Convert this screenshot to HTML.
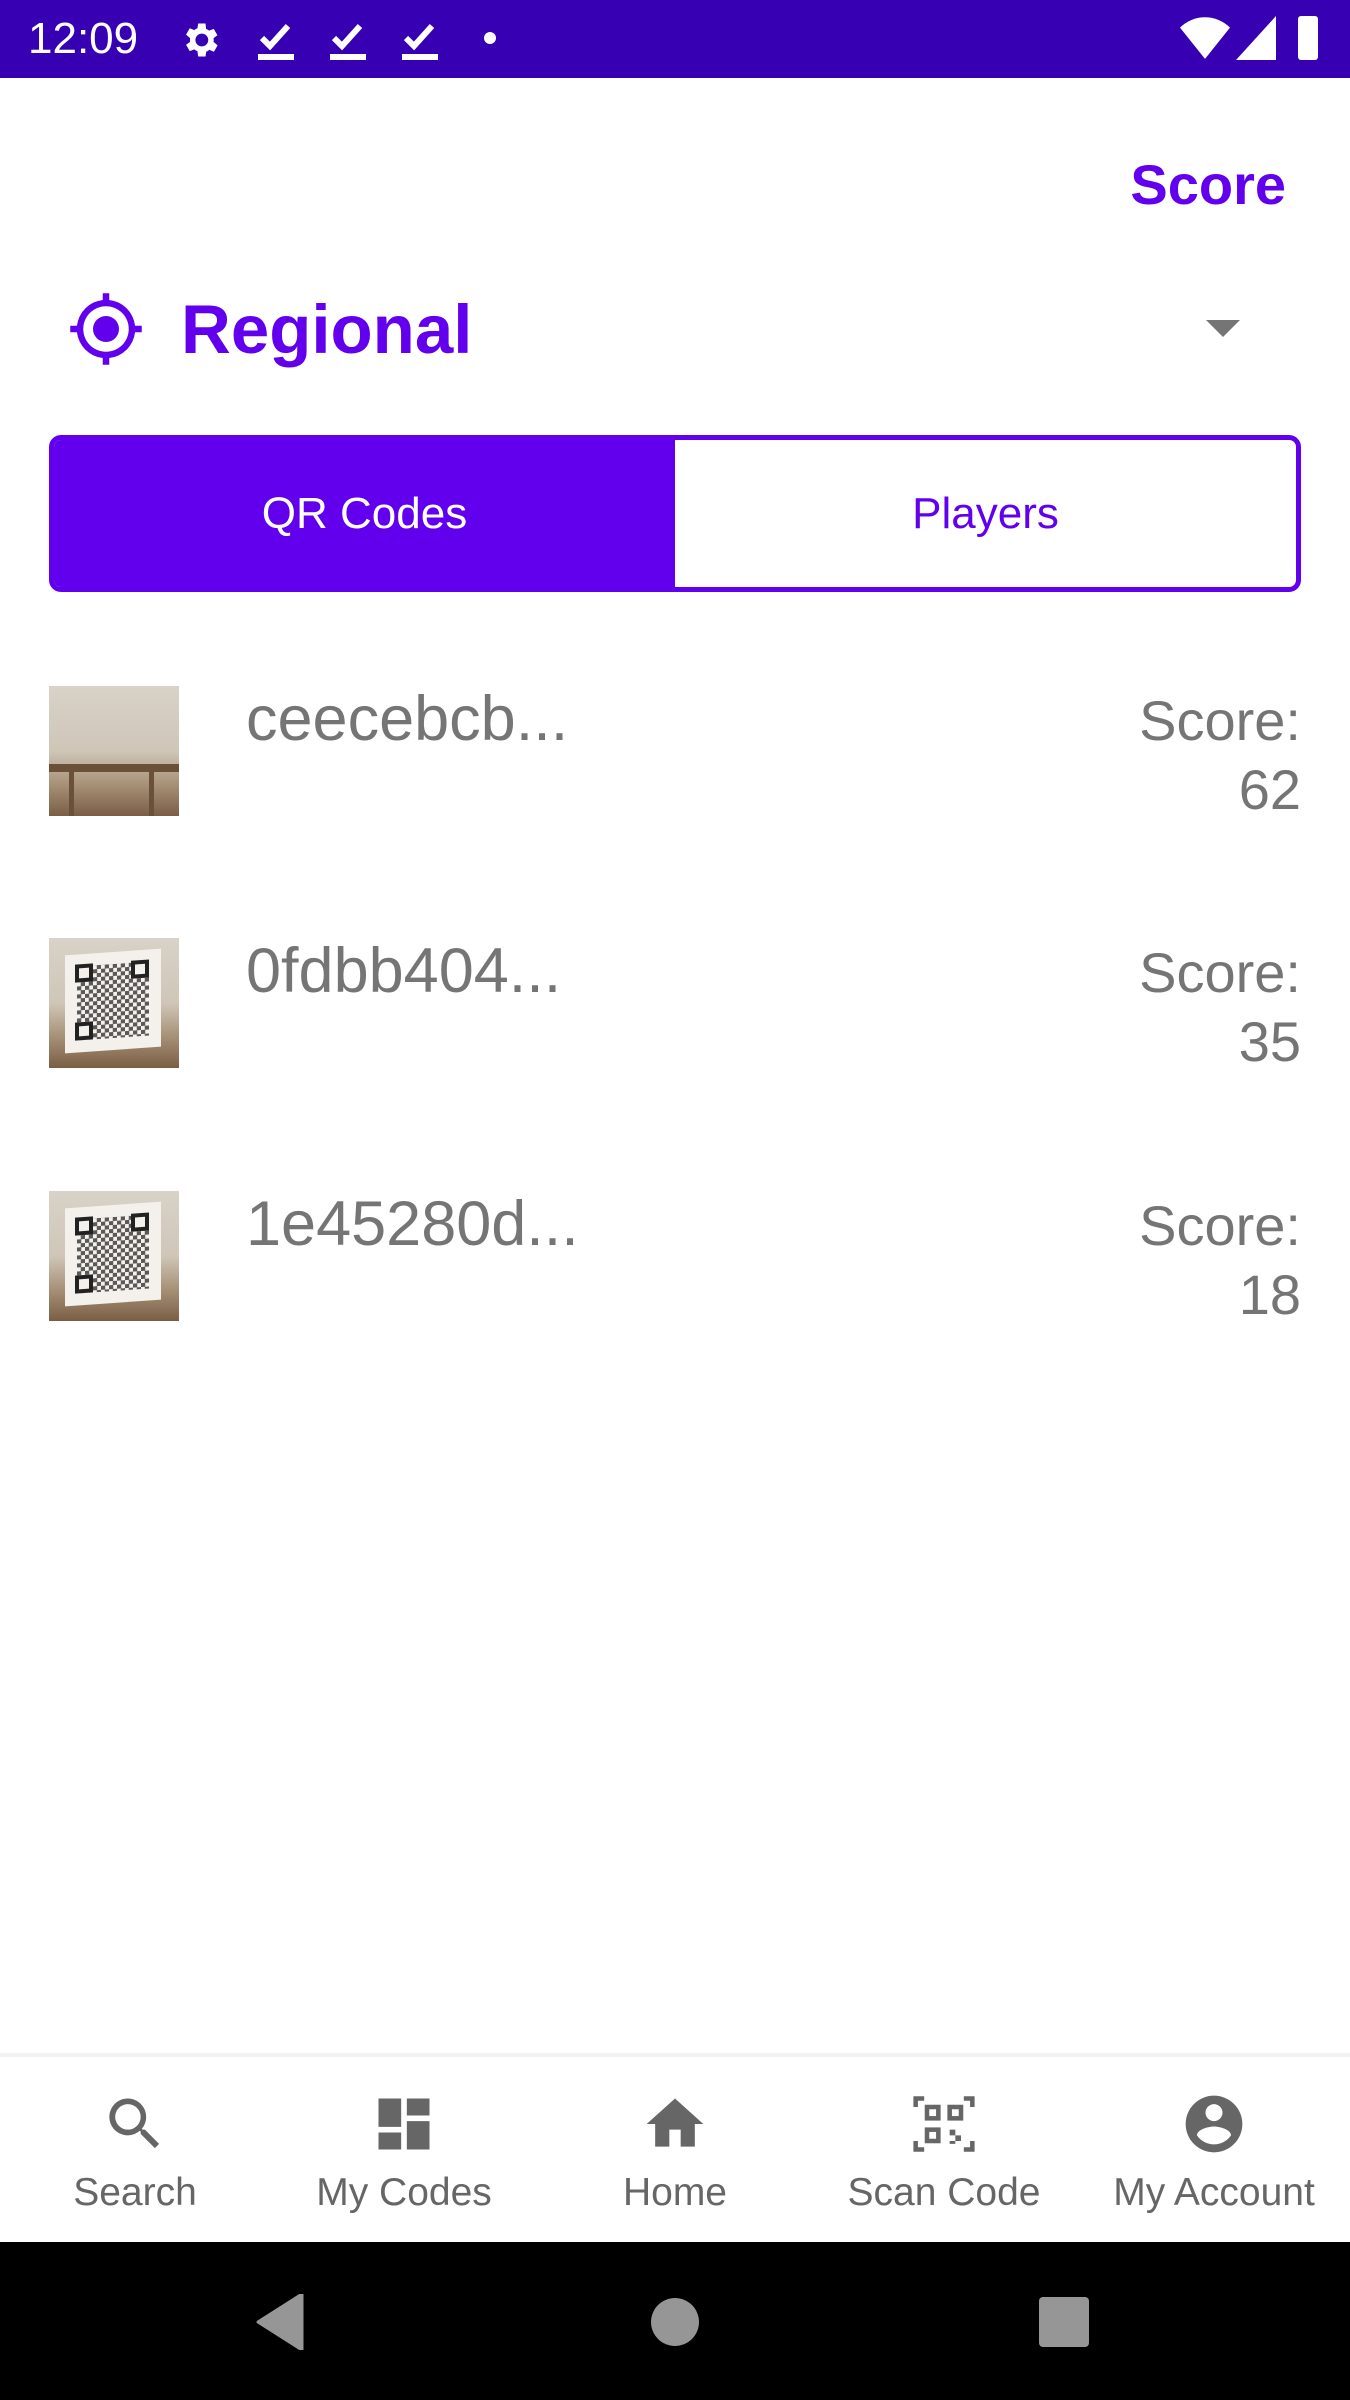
<!DOCTYPE html>
<html><head><meta charset="utf-8"><style>
*{margin:0;padding:0;box-sizing:border-box}
body{width:1350px;height:2400px;position:relative;background:#fff;font-family:"Liberation Sans",sans-serif;overflow:hidden}
.a{position:absolute}
.sb{left:0;top:0;width:1350px;height:78px;background:#3700B3}
.name{left:246px;font-size:63px;color:#757575;line-height:70px}
.sc{right:49px;font-size:56px;color:#757575;text-align:right;line-height:69px}
.img{left:49px;width:130px;height:130px;background:linear-gradient(180deg,#d8d2c8 0%,#cfc6b8 50%,#a89278 75%,#7a5e44 100%);overflow:hidden}
.qr{left:16px;top:14px;width:96px;height:98px;background:#f4f1ec;transform:skewY(-4deg)}
.qr i{position:absolute;left:12px;top:12px;width:72px;height:74px;background:repeating-conic-gradient(#333 0 25%,#f4f1ec 0 50%) 0 0/8px 8px;opacity:.8}
.qr b{position:absolute;width:18px;height:18px;border:4px solid #222;background:#f4f1ec}
.nl{font-size:39px;color:#666;width:270px;text-align:center;top:2171px}
</style></head><body>
<div class="a sb"></div>
<div class="a" style="left:28px;top:14px;font-size:44px;color:#fff">12:09</div>
<svg class="a" style="left:178px;top:18px" width="44" height="44" viewBox="0 0 24 24"><path fill="#fff" d="M19.4 13a7.5 7.5 0 000-2l2.1-1.6-2-3.5-2.5 1a7 7 0 00-1.7-1L15 3h-4l-.4 2.6a7 7 0 00-1.7 1l-2.5-1-2 3.5L6.6 11a7.5 7.5 0 000 2l-2.2 1.6 2 3.5 2.5-1a7 7 0 001.7 1L11 21h4l.4-2.6a7 7 0 001.7-1l2.5 1 2-3.5zM13 15.5a3.5 3.5 0 110-7 3.5 3.5 0 010 7z"/></svg>
<svg class="a" style="left:256px;top:18px" width="40" height="44" viewBox="0 0 20 22"><path d="M3 10l4 4 9-10" stroke="#fff" stroke-width="3" fill="none"/><rect x="1" y="18" width="18" height="3" fill="#fff"/></svg>
<svg class="a" style="left:328px;top:18px" width="40" height="44" viewBox="0 0 20 22"><path d="M3 10l4 4 9-10" stroke="#fff" stroke-width="3" fill="none"/><rect x="1" y="18" width="18" height="3" fill="#fff"/></svg>
<svg class="a" style="left:400px;top:18px" width="40" height="44" viewBox="0 0 20 22"><path d="M3 10l4 4 9-10" stroke="#fff" stroke-width="3" fill="none"/><rect x="1" y="18" width="18" height="3" fill="#fff"/></svg>
<div class="a" style="left:484px;top:32px;width:12px;height:12px;border-radius:6px;background:#fff"></div>
<svg class="a" style="left:1180px;top:16px" width="50" height="44" viewBox="0 0 24 20"><path fill="#fff" d="M0 5a17 17 0 0124 0L12 20z"/></svg>
<svg class="a" style="left:1236px;top:16px" width="40" height="44" viewBox="0 0 20 22"><path fill="#fff" d="M20 0v22H0z"/></svg>
<div class="a" style="left:1298px;top:16px;width:20px;height:44px;background:#fff;border-radius:3px"></div>

<div class="a" style="right:64px;top:152px;font-size:56px;font-weight:bold;color:#6200EE">Score</div>
<svg class="a" style="left:67px;top:290px" width="78" height="78" viewBox="0 0 24 24"><path fill="#6200EE" d="M12 8a4 4 0 100 8 4 4 0 000-8zm8.94 3A9 9 0 0013 3.06V1h-2v2.06A9 9 0 003.06 11H1v2h2.06A9 9 0 0011 20.94V23h2v-2.06A9 9 0 0020.94 13H23v-2h-2.06zM12 19a7 7 0 110-14 7 7 0 010 14z"/></svg>
<div class="a" style="left:181px;top:290px;font-size:69px;font-weight:bold;color:#6200EE">Regional</div>
<svg class="a" style="left:1206px;top:320px" width="34" height="18"><path d="M0 0h34L17 17z" fill="#757575"/></svg>

<div class="a" style="left:49px;top:435px;width:1252px;height:157px;border:5px solid #6200EE;border-radius:12px;overflow:hidden">
<div class="a" style="left:0;top:0;width:621px;height:100%;background:#6200EE"></div>
<div class="a" style="left:0;top:0;width:621px;line-height:147px;text-align:center;color:#fff;font-size:44px">QR Codes</div>
<div class="a" style="left:621px;top:0;width:621px;line-height:147px;text-align:center;color:#6200EE;font-size:44px">Players</div>
</div>

<div class="a img" style="top:686px"><div class="a" style="left:0;top:78px;width:130px;height:8px;background:#6b5039"></div><div class="a" style="left:20px;top:86px;width:5px;height:44px;background:#6b5039"></div><div class="a" style="left:100px;top:86px;width:5px;height:44px;background:#6b5039"></div></div>
<div class="a name" style="top:684px">ceecebcb...</div>
<div class="a sc" style="top:686px">Score:<br>62</div>

<div class="a img" style="top:938px"><div class="a qr"><i></i><b style="left:10px;top:10px"></b><b style="left:66px;top:10px"></b><b style="left:10px;top:68px"></b></div></div>
<div class="a name" style="top:936px">0fdbb404...</div>
<div class="a sc" style="top:938px">Score:<br>35</div>

<div class="a img" style="top:1191px"><div class="a qr"><i></i><b style="left:10px;top:10px"></b><b style="left:66px;top:10px"></b><b style="left:10px;top:68px"></b></div></div>
<div class="a name" style="top:1189px">1e45280d...</div>
<div class="a sc" style="top:1191px">Score:<br>18</div>

<div class="a" style="left:0;top:2053px;width:1350px;height:4px;background:#f2f2f2"></div>
<svg class="a" style="left:101px;top:2090px" width="68" height="68" viewBox="0 0 24 24"><path fill="#666" d="M15.5 14h-.8l-.3-.3A6.5 6.5 0 109.5 16a6.5 6.5 0 004.2-1.6l.3.3v.8l5 5 1.5-1.5-5-5zm-6 0a4.5 4.5 0 110-9 4.5 4.5 0 010 9z"/></svg>
<svg class="a" style="left:370px;top:2090px" width="68" height="68" viewBox="0 0 24 24"><path fill="#666" d="M3 13h8V3H3v10zm0 8h8v-6H3v6zm10 0h8V11h-8v10zm0-18v6h8V3h-8z"/></svg>
<svg class="a" style="left:641px;top:2090px" width="68" height="68" viewBox="0 0 24 24"><path fill="#666" d="M10 20v-6h4v6h5v-8h3L12 3 2 12h3v8z"/></svg>
<svg class="a" style="left:910px;top:2090px" width="68" height="68" viewBox="0 0 24 24"><g fill="none" stroke="#666" stroke-width="1.6"><path d="M2 6V3h3M19 3h3v3M22 18v3h-3M5 21H2v-3"/><rect x="6" y="6" width="4" height="4"/><rect x="14" y="6" width="4" height="4"/><rect x="6" y="14" width="4" height="4"/></g><path fill="#666" d="M14 14h2v2h-2zM16 16h2v2h-2zM14 18h2v1h-2z"/></svg>
<svg class="a" style="left:1180px;top:2090px" width="68" height="68" viewBox="0 0 24 24"><path fill="#666" d="M12 2a10 10 0 100 20 10 10 0 000-20zm0 3a3 3 0 110 6 3 3 0 010-6zm0 14.2a7.2 7.2 0 01-6-3.2c0-2 4-3.1 6-3.1s6 1.1 6 3.1a7.2 7.2 0 01-6 3.2z"/></svg>
<div class="a nl" style="left:0">Search</div>
<div class="a nl" style="left:269px">My Codes</div>
<div class="a nl" style="left:540px">Home</div>
<div class="a nl" style="left:809px">Scan Code</div>
<div class="a nl" style="left:1079px">My Account</div>

<div class="a" style="left:0;top:2242px;width:1350px;height:158px;background:#000"></div>
<svg class="a" style="left:256px;top:2294px" width="50" height="56"><path d="M46 0v56L2 28z" fill="#969696" stroke="#969696" stroke-width="3" stroke-linejoin="round"/></svg>
<div class="a" style="left:651px;top:2298px;width:48px;height:48px;border-radius:24px;background:#969696"></div>
<div class="a" style="left:1039px;top:2297px;width:50px;height:50px;border-radius:4px;background:#969696"></div>
</body></html>
